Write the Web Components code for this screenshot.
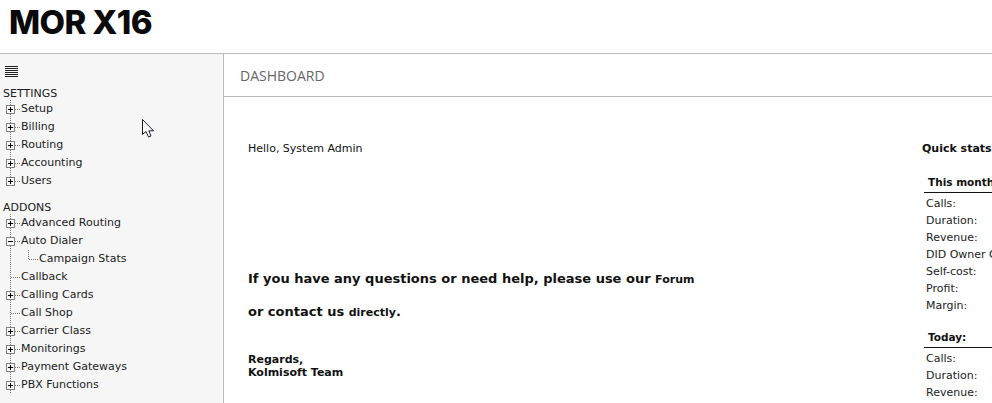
<!DOCTYPE html>
<html><head><meta charset="utf-8">
<style>
html,body{margin:0;height:403px;overflow:hidden;background:#fff}
body{font-family:"DejaVu Sans",Verdana,sans-serif;font-size:11px;color:#000;display:flex;flex-direction:column}
</style></head><body>
<app-header>MOR X16</app-header>
<div style="display:flex;flex:1;min-height:0">
<side-bar>
<tree-group label="SETTINGS">
<tree-node kind="plus">Setup</tree-node>
<tree-node kind="plus">Billing</tree-node>
<tree-node kind="plus">Routing</tree-node>
<tree-node kind="plus">Accounting</tree-node>
<tree-node kind="plus" last>Users</tree-node>
</tree-group>
<tree-group label="ADDONS">
<tree-node kind="plus">Advanced Routing</tree-node>
<tree-node kind="minus">Auto Dialer</tree-node>
<tree-node kind="child">Campaign Stats</tree-node>
<tree-node kind="leaf">Callback</tree-node>
<tree-node kind="plus">Calling Cards</tree-node>
<tree-node kind="leaf">Call Shop</tree-node>
<tree-node kind="plus">Carrier Class</tree-node>
<tree-node kind="plus">Monitorings</tree-node>
<tree-node kind="plus">Payment Gateways</tree-node>
<tree-node kind="plus">PBX Functions</tree-node>
</tree-group>
</side-bar>
<dash-board>
<welcome-panel></welcome-panel>
<quick-stats>
<stat-block title="This month" items="Calls:|Duration:|Revenue:|DID Owner Cost:|Self-cost:|Profit:|Margin:"></stat-block>
<stat-block title="Today:" items="Calls:|Duration:|Revenue:"></stat-block>
</quick-stats>
</dash-board>
</div>
<mouse-pointer></mouse-pointer>
<script>
function def(name, html, init){
  customElements.define(name, class extends HTMLElement{
    connectedCallback(){
      if(this.shadowRoot) return;
      const r=this.attachShadow({mode:'open'});
      r.innerHTML=typeof html==='function'?html(this):html;
    }
  });
}
def('app-header',`<style>
:host{display:block;height:53px;border-bottom:1px solid #bbb;box-sizing:content-box;overflow:hidden}
div{font:800 33px/1 Inter,"Liberation Sans",sans-serif;letter-spacing:-.6px;padding:6px 0 0 9px;color:#0a0a0a}
</style><div><slot></slot></div>`);
def('side-bar',`<style>
:host{display:block;width:223px;flex:none;background:#f6f6f6;border-right:1px solid #bbb;overflow:hidden}
svg{display:block;margin:12px 0 0 5px}
.t{padding-top:9px}
</style>
<svg width="13" height="12" viewBox="0 0 13 12"><path d="M0 .5h13M0 2.5h13M0 4.5h13M0 6.5h13M0 8.5h13M0 10.5h13" stroke="#222" fill="none"/></svg>
<div class="t"><slot></slot></div>`);
def('tree-group',el=>`<style>
:host{display:block;margin-bottom:11px}
.l{padding-left:3px;height:13px;line-height:13px;color:#222}
</style><div class="l">${el.getAttribute('label')}</div><slot></slot>`);
def('tree-node',el=>{
  const k=el.getAttribute('kind'), last=el.hasAttribute('last');
  const d='stroke="#777" stroke-dasharray="1 1" fill="none"';
  let g='';
  if(k==='child'){
    g=`<path d="M10.5 0V18M28.5 0V9M29 9.5H39" ${d}/>`;
  }else{
    g=`<path d="M10.5 0V${last?9:18}M11 9.5H21" ${d}/>`;
  }
  if(k==='plus'||k==='minus'){
    g+=`<rect x="6.5" y="5.5" width="8" height="8" fill="#f6f6f6" stroke="#808080"/><path d="M8 9.5h5${k==='plus'?'M10.5 7v5':''}" stroke="#000" fill="none"/>`;
  }
  const w=k==='child'?39:21;
  return `<style>
:host{display:flex;height:18px;align-items:center;color:#222;white-space:nowrap}
svg{flex:none;display:block}
span{line-height:18px;position:static;margin-top:-1px}
</style><svg width="${w}" height="18" viewBox="0 0 ${w} 18">${g}</svg><span><slot></slot></span>`;
});
def('dash-board',`<style>
:host{display:flex;flex-direction:column;flex:1;min-width:0;overflow:hidden}
h1{margin:0;height:42px;line-height:44px;border-bottom:1px solid #bbb;padding-left:16px;font:400 14px/44px "Open Sans",sans-serif;color:#666;flex:none}
.c{display:flex;flex:1;min-height:0;padding:45px 0 0 24px}
</style><h1>DASHBOARD</h1><div class="c"><slot></slot></div>`);
def('welcome-panel',`<style>
:host{display:block;width:674px;flex:none;color:#111}
p{margin:0}
.h{height:13px;line-height:13px}
.b{font-weight:700;font-size:13px;line-height:16px}
small{font-size:11px}
.q1{margin-top:116px}
.q2{margin-top:16px}
.r{margin-top:32px;font-weight:700;line-height:13px}
</style>
<p class="h">Hello, System Admin</p>
<p class="b q1">If you have any questions or need help, please use our <small>Forum</small></p>
<p class="b q2">or contact us <small>directly</small>.</p>
<p class="r">Regards,<br>Kolmisoft Team</p>`);
def('quick-stats',`<style>
:host{display:block;flex:none;width:200px;color:#111}
.h{font-weight:700;height:13px;line-height:13px;margin-bottom:21px}
.c{padding-left:2px}
</style><div class="h">Quick stats</div><div class="c"><slot></slot></div>`);
def('stat-block',el=>`<style>
:host{display:block;margin-bottom:17px}
.t{font-weight:700;font-size:10.5px;padding-left:4px;height:16px;line-height:13px;border-bottom:1px solid #111;margin-bottom:2px;white-space:nowrap}
.r{height:17px;line-height:17px;padding-left:2px;color:#222;white-space:nowrap}
</style><div class="t">${el.getAttribute('title')}</div>${el.getAttribute('items').split('|').map(s=>`<div class="r">${s}</div>`).join('')}`);
def('mouse-pointer',`<style>
:host{position:absolute;left:142px;top:119px;display:block;width:14px;height:20px}
</style><svg width="14" height="20" viewBox="0 0 14 20"><path d="M.5.5V15.5L4 12.5 6.5 18 9 17 6.8 11.8H11.5Z" fill="#fff" stroke="#1a1a33"/></svg>`);
</script>
</body></html>
